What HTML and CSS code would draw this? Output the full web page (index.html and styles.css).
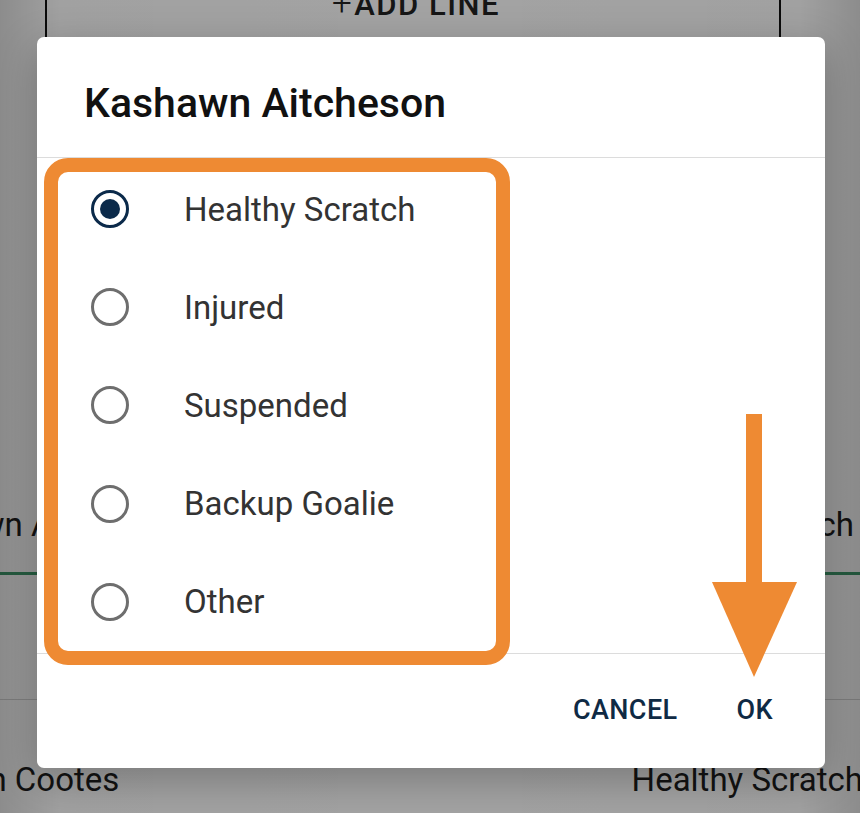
FILE: index.html
```html
<!DOCTYPE html>
<html lang="en">
<head>
<meta charset="utf-8">
<title>Kashawn Aitcheson</title>
<link rel="stylesheet" href="styles.css">
</head>
<body>
<div class="page">
  <div class="addline"><span class="addline-text"><span class="plus">+</span>ADD LINE</span></div>
  <div class="gap"></div>
  <div class="player-row selected-row">
    <span class="name name-1">Kashawn Aitcheson</span>
    <span class="status status-1">Healthy Scratch</span>
  </div>
  <div class="player-row plain-row"></div>
  <div class="player-row last-row">
    <span class="name name-2">Carson Cootes</span>
    <span class="status">Healthy Scratch</span>
  </div>
</div>
<div class="scrim"></div>

<div class="dialog">
  <h2 class="dialog-title">Kashawn Aitcheson</h2>
  <div class="dialog-body">
    <label class="option"><span class="radio checked"></span><span class="option-label">Healthy Scratch</span></label>
    <label class="option"><span class="radio"></span><span class="option-label">Injured</span></label>
    <label class="option"><span class="radio"></span><span class="option-label">Suspended</span></label>
    <label class="option"><span class="radio"></span><span class="option-label">Backup Goalie</span></label>
    <label class="option"><span class="radio"></span><span class="option-label">Other</span></label>
  </div>
  <div class="dialog-actions">
    <button class="action">CANCEL</button>
    <button class="action">OK</button>
  </div>
</div>

<div class="highlight-box"></div>
<svg class="arrow" width="90" height="270" viewBox="0 0 90 270">
  <rect x="34" y="0" width="16" height="172" fill="#ee8a33"/>
  <polygon points="0,168 85,168 42,263" fill="#ee8a33"/>
</svg>
</body>
</html>
```

FILE: styles.css
```css
html, body {
  margin: 0;
  padding: 0;
}
body {
  width: 860px;
  height: 813px;
  overflow: hidden;
  position: relative;
  background: #ffffff;
  font-family: Roboto, "Liberation Sans", sans-serif;
}

/* underlying page */
.page {
  display: flex;
  flex-direction: column;
  height: 813px;
}
.page > * {
  flex: none;
}
.addline {
  margin: 0 79px 0 45px;
  height: 37px;
  border-left: 2px solid #111;
  border-right: 2px solid #111;
  display: flex;
  justify-content: center;
  overflow: hidden;
}
.addline-text {
  font-size: 31px;
  font-weight: 500;
  letter-spacing: 1.5px;
  color: #222;
  line-height: 34px;
  margin-top: -13px;
  padding-left: 6px;
}
.plus {
  font-weight: 300;
  font-size: 35px;
  margin-right: 1px;
}
.gap {
  height: 451px;
}
.player-row {
  display: flex;
  justify-content: space-between;
  align-items: center;
  font-size: 33px;
  line-height: 39px;
  color: #1d1d1d;
  white-space: nowrap;
}
.selected-row {
  height: 72px;
  padding-bottom: 12px;
  border-bottom: 3px solid #3f9a6c;
}
.plain-row {
  height: 124px;
  border-bottom: 1px solid #d6d6d6;
}
.last-row {
  height: 51px;
  align-items: flex-start;
  padding-top: 60px;
}
.name-1 { margin-left: -112px; }
.name-2 { margin-left: -98px; }
.status {
  margin-right: -3px;
}
.status-1 {
  margin-right: 6px;
}

.scrim {
  position: absolute;
  inset: 0;
  background: linear-gradient(to right, rgba(0,0,0,0.45) 0%, rgba(0,0,0,0.37) 7%, rgba(0,0,0,0.36) 50%, rgba(0,0,0,0.37) 93%, rgba(0,0,0,0.45) 100%);
}

/* dialog */
.dialog {
  position: absolute;
  left: 37px;
  top: 37px;
  width: 788px;
  height: 731px;
  background: #fff;
  border-radius: 7px;
  box-shadow: 0 12px 40px rgba(0,0,0,0.25);
  display: flex;
  flex-direction: column;
}
.dialog-title {
  margin: 0;
  height: 121px;
  box-sizing: border-box;
  padding: 42px 0 0 47px;
  font-size: 41px;
  font-weight: 500;
  line-height: 48px;
  color: #111;
  border-bottom: 1px solid #dcdcdc;
}
.dialog-body {
  height: 493px;
  display: flex;
  flex-direction: column;
  padding-top: 2px;
  border-bottom: 1px solid #dcdcdc;
}
.option {
  height: 98.2px;
  display: flex;
  align-items: center;
  padding-left: 54px;
}
.radio {
  width: 38px;
  height: 38px;
  box-sizing: border-box;
  border: 3.5px solid #6e6e6e;
  border-radius: 50%;
  position: relative;
  flex: none;
}
.radio.checked {
  border-color: #0b2a4a;
}
.radio.checked::after {
  content: "";
  position: absolute;
  left: 50%;
  top: 50%;
  width: 20px;
  height: 20px;
  margin: -10px 0 0 -10px;
  border-radius: 50%;
  background: #0b2a4a;
}
.option-label {
  margin-left: 55px;
  font-size: 33px;
  color: #333;
}
.dialog-actions {
  flex: 1;
  display: flex;
  justify-content: flex-end;
  align-items: center;
  gap: 47px;
  padding-right: 46px;
  padding-bottom: 2px;
}
.action {
  background: none;
  border: 0;
  padding: 8px 6px;
  font-family: Roboto, "Liberation Sans", sans-serif;
  font-size: 27px;
  font-weight: 500;
  letter-spacing: 0.4px;
  color: #0f2a44;
}

/* annotations */
.highlight-box {
  position: absolute;
  left: 44px;
  top: 158px;
  width: 466px;
  height: 507px;
  box-sizing: border-box;
  border: 14px solid #ee8a33;
  border-radius: 24px;
}
.arrow {
  position: absolute;
  left: 712px;
  top: 414px;
}
```
